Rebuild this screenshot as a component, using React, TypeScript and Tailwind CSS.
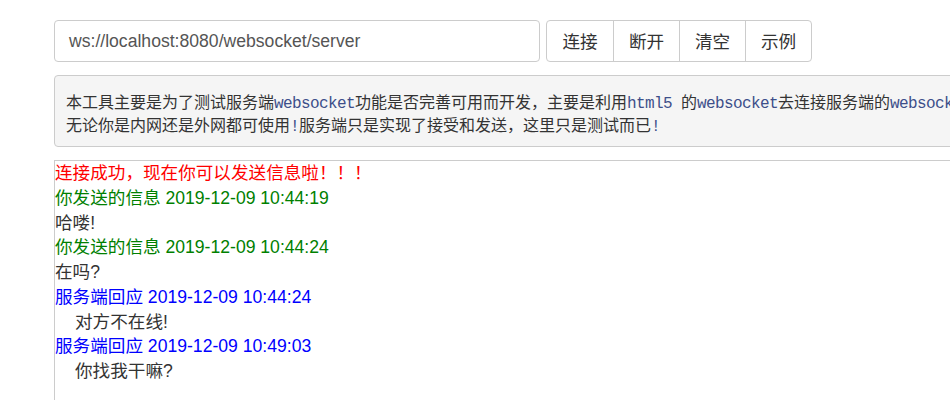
import React from "react";

const sans = { fontFamily: '"Liberation Sans", Arial, "Noto Sans CJK SC", sans-serif' };

function Code({ children }: { children: React.ReactNode }) {
  return (
    <span className="text-[#3d4f8a] tracking-[-0.6px]" style={{ fontFamily: '"Liberation Mono", monospace' }}>
      {children}
    </span>
  );
}

export default function App() {
  const btns = ["连接", "断开", "清空", "示例"];
  return (
    <div className="w-[950px] h-[400px] overflow-hidden bg-white" style={sans}>
      <div className="w-[1100px] pl-[54px] pt-[20px]">
        <div className="flex items-center gap-[6px]">
          <div className="w-[486px] h-[42px] border border-[#cccccc] rounded-[4px] flex items-center pl-[14px] text-[17.6px] text-[#555555]">
            ws://localhost:8080/websocket/server
          </div>
          <div className="flex h-[42px] border border-[#cccccc] rounded-[4px]">
            {btns.map((b, i) => (
              <div
                key={b}
                className={
                  "w-[66px] flex items-center justify-center text-[17.6px] text-[#333333] " +
                  (i > 0 ? "border-l border-[#cccccc]" : "")
                }
                style={{ fontFamily: '"Noto Sans CJK SC", sans-serif' }}
              >
                {b}
              </div>
            ))}
          </div>
        </div>

        <div
          className="mt-[13px] h-[72px] bg-[#f5f5f5] border border-[#cccccc] rounded-[4px] pl-[11px] pt-[15px] text-[16px] leading-[20px] text-[#333333] whitespace-nowrap"
          style={{ fontFamily: '"Noto Sans CJK SC", sans-serif' }}
        >
          <div>
            本工具主要是为了测试服务端<Code>websocket</Code>功能是否完善可用而开发，主要是利用<Code>html5 </Code>的<Code>websocket</Code>去连接服务端的<Code>websocket,</Code>
          </div>
          <div>
            无论你是内网还是外网都可使用<Code>!</Code>服务端只是实现了接受和发送，这里只是测试而已<Code>!</Code>
          </div>
        </div>

        <div className="mt-[13px] h-[300px] border-t border-l border-[#cccccc] text-[17.6px] leading-[24.75px] text-[#333333]">
          <div className="text-[#ff0000]">连接成功，现在你可以发送信息啦！！！</div>
          <div className="text-[#008000]">你发送的信息 2019-12-09 10:44:19</div>
          <div>哈喽!</div>
          <div className="text-[#008000]">你发送的信息 2019-12-09 10:44:24</div>
          <div>在吗?</div>
          <div className="text-[#0000ff]">服务端回应 2019-12-09 10:44:24</div>
          <div className="pl-[20px]">对方不在线!</div>
          <div className="text-[#0000ff]">服务端回应 2019-12-09 10:49:03</div>
          <div className="pl-[20px]">你找我干嘛?</div>
        </div>
      </div>
    </div>
  );
}
